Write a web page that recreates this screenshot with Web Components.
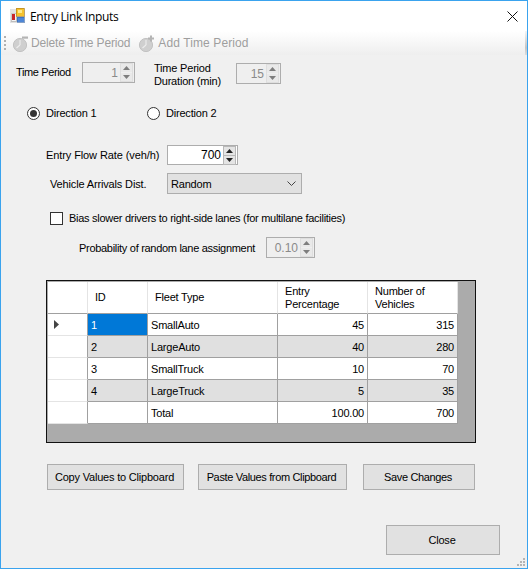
<!DOCTYPE html>
<html>
<head>
<meta charset="utf-8">
<title>Entry Link Inputs</title>
<style>
html, body {
	margin: 0;
	padding: 0;
	background: #f0f0f0;
}
body {
	font: 11px "Liberation Sans", Arial, sans-serif;
	letter-spacing: -0.2px;
	white-space: nowrap;
	color: #000;
}
</style>
</head>
<body>
<entry-link-inputs></entry-link-inputs>
<script>
const arrowUp = '<svg width="7" height="4" viewBox="0 0 7 4"><path d="M3.5 0 7 4H0Z" fill="currentColor"/></svg>';
const arrowDown = '<svg width="7" height="4" viewBox="0 0 7 4"><path d="M0 0H7L3.5 4Z" fill="currentColor"/></svg>';

class WinDialog extends HTMLElement {
	constructor() {
		super();
		this.attachShadow({ mode: 'open' });
		this.shadowRoot.innerHTML = `
<style>
:host {
	display: flex;
	flex-direction: column;
	box-sizing: border-box;
	position: relative;
	width: 528px;
	height: 569px;
	border: 1px solid #3aa3ee;
	background: #f0f0f0;
	overflow: hidden;
}
.title {
	display: flex;
	align-items: center;
	flex: none;
	height: 30px;
	background: #fff;
	padding-left: 9px;
}
.title span {
	margin-left: 5px;
	font: 12px "Open Sans", sans-serif;
	letter-spacing: -0.32px;
}
.logo { margin-top: -1px; }
.close {
	margin-left: auto;
	margin-right: 9px;
	display: block;
}
.grip {
	position: absolute;
	right: 2px;
	bottom: 2px;
}
</style>
<div class="title">
	<svg class="logo" width="15" height="15" viewBox="0 0 15 15" shape-rendering="crispEdges">
		<rect x="0" y="1" width="15" height="14" fill="#e2e2e2"/>
		<rect x="1" y="5" width="5" height="8" fill="#f4f4f4" stroke="#9a9a9a" stroke-width="0.5"/>
		<rect x="2" y="6" width="3" height="6" fill="#c8242a"/>
		<rect x="6" y="0" width="8" height="8" fill="#f6c22c" stroke="#a8781c" stroke-width="0.6"/>
		<rect x="8" y="2" width="4" height="3" fill="#fde98a"/>
		<rect x="7" y="9" width="7" height="5" fill="#4e86d6" stroke="#2c5fa8" stroke-width="0.5"/>
	</svg>
	<span><slot name="title"></slot></span>
	<svg class="close" width="11" height="11" viewBox="0 0 11 11"><path d="M.5.5 10.5 10.5M10.5.5.5 10.5" stroke="#111" stroke-width="1" fill="none"/></svg>
</div>
<slot></slot>
<svg class="grip" width="8" height="8" viewBox="0 0 8 8" fill="#b4b4b4" shape-rendering="crispEdges">
	<rect x="6" y="0" width="2" height="2"/>
	<rect x="3" y="3" width="2" height="2"/><rect x="6" y="3" width="2" height="2"/>
	<rect x="0" y="6" width="2" height="2"/><rect x="3" y="6" width="2" height="2"/><rect x="6" y="6" width="2" height="2"/>
</svg>
`;
	}
}
customElements.define('win-dialog', WinDialog);

class ToolBar extends HTMLElement {
	constructor() {
		super();
		this.attachShadow({ mode: 'open' });
		this.shadowRoot.innerHTML = `
<style>
:host {
	display: flex;
	align-items: center;
	flex: none;
	height: 24px;
	box-sizing: border-box;
	padding-left: 3px;
	background: linear-gradient(#fff, #eeeeee);
	position: relative;
	font-size: 12px;
	letter-spacing: -0.15px;
}
.dots {
	width: 2px;
	height: 15px;
	margin-right: 6px;
	background: repeating-linear-gradient(#b0b0b0 0 2px, transparent 2px 4px);
}
.edge {
	position: absolute;
	right: 0;
	top: 0;
	bottom: 0;
	width: 2px;
	background: linear-gradient(#f4f4f4, #c4c4c4 70%, #dcdcdc);
}
</style>
<div class="dots"></div>
<slot></slot>
<div class="edge"></div>
`;
	}
}
customElements.define('tool-bar', ToolBar);

class ToolButton extends HTMLElement {
	constructor() {
		super();
		this.attachShadow({ mode: 'open' });
		const add = this.getAttribute('kind') == 'add';
		this.shadowRoot.innerHTML = `
<style>
:host {
	display: flex;
	align-items: center;
	color: #9e9e9e;
	margin-right: 8px;
}
svg { margin-right: ${add ? 3 : 2}px; }
</style>
<svg width="17" height="17" viewBox="0 0 17 17">
	<circle cx="8" cy="10" r="6.6" fill="#cfcfcf" stroke="#c2c2c2"/>
	<path d="M8 10 4.5 13M8 10V5" stroke="#ececec" stroke-width="1.2" fill="none"/>
	${add
		? '<path d="M12 0.5h2v2h2v2h-2v2h-2v-2h-2v-2h2z" fill="#b4b4b4"/>'
		: '<rect x="10" y="1.5" width="6" height="2.2" fill="#b4b4b4"/>'}
</svg>
<slot></slot>
`;
	}
}
customElements.define('tool-button', ToolButton);

class NumSpin extends HTMLElement {
	constructor() {
		super();
		this.attachShadow({ mode: 'open' });
		const off = this.hasAttribute('disabled');
		this.shadowRoot.innerHTML = `
<style>
:host {
	display: flex;
	align-items: center;
	box-sizing: border-box;
	flex: none;
	height: 21px;
	border: 1px solid #adadad;
	background: ${off ? '#efefef' : '#fff'};
	color: ${off ? '#8a8a8a' : '#000'};
	font-size: 12px;
	letter-spacing: 0;
}
.val {
	flex: 1;
	text-align: right;
	padding-right: 2px;
}
.btns {
	display: flex;
	flex-direction: column;
	gap: 1px;
	width: 13px;
	margin-right: 1px;
	background: ${off ? '#efefef' : '#b8b8b8'};
	border: 1px solid ${off ? '#dedede' : '#b8b8b8'};
	box-sizing: border-box;
}
.btns div {
	display: flex;
	align-items: center;
	justify-content: center;
	height: 8px;
	background: ${off ? '#e9e9e9' : '#e4e4e4'};
	color: ${off ? '#7e7e7e' : '#222'};
}
svg { display: block; }
</style>
<div class="val"><slot></slot></div>
<div class="btns"><div>${arrowUp}</div><div>${arrowDown}</div></div>
`;
	}
}
customElements.define('num-spin', NumSpin);

class RadioOption extends HTMLElement {
	constructor() {
		super();
		this.attachShadow({ mode: 'open' });
		const dot = this.hasAttribute('checked') ? '<circle cx="6.5" cy="6.5" r="3.5" fill="#333"/>' : '';
		this.shadowRoot.innerHTML = `
<style>
:host {
	display: flex;
	align-items: center;
	gap: 6px;
}
svg { display: block; }
</style>
<svg width="13" height="13" viewBox="0 0 13 13"><circle cx="6.5" cy="6.5" r="6" fill="#fff" stroke="#333"/>${dot}</svg>
<slot></slot>
`;
	}
}
customElements.define('radio-option', RadioOption);

class CheckOption extends HTMLElement {
	constructor() {
		super();
		this.attachShadow({ mode: 'open' });
		this.shadowRoot.innerHTML = `
<style>
:host {
	display: flex;
	align-items: center;
	gap: 6px;
}
.box {
	box-sizing: border-box;
	width: 13px;
	height: 13px;
	border: 1px solid #333;
	background: #fff;
}
</style>
<div class="box"></div>
<slot></slot>
`;
	}
}
customElements.define('check-option', CheckOption);

class DropSelect extends HTMLElement {
	constructor() {
		super();
		this.attachShadow({ mode: 'open' });
		this.shadowRoot.innerHTML = `
<style>
:host {
	display: flex;
	align-items: center;
	justify-content: space-between;
	box-sizing: border-box;
	height: 21px;
	border: 1px solid #adadad;
	background: #e1e1e1;
	padding: 0 5px 0 3px;
}
svg { display: block; }
</style>
<slot></slot>
<svg width="9" height="5" viewBox="0 0 9 5"><path d="M.5.5 4.5 4.5 8.5.5" fill="none" stroke="#444"/></svg>
`;
	}
}
customElements.define('drop-select', DropSelect);

class WinButton extends HTMLElement {
	constructor() {
		super();
		this.attachShadow({ mode: 'open' });
		this.shadowRoot.innerHTML = `
<style>
:host {
	display: flex;
	align-items: center;
	justify-content: center;
	box-sizing: border-box;
	flex: none;
	height: 26px;
	padding-right: 2px;
	border: 1px solid #adadad;
	background: #e1e1e1;
}
</style>
<slot></slot>
`;
	}
}
customElements.define('win-button', WinButton);

const gridRows = [
	['1', 'SmallAuto', '45', '315'],
	['2', 'LargeAuto', '40', '280'],
	['3', 'SmallTruck', '10', '70'],
	['4', 'LargeTruck', '5', '35'],
	['', 'Total', '100.00', '700'],
];

class DataGrid extends HTMLElement {
	constructor() {
		super();
		this.attachShadow({ mode: 'open' });
		const head = ['', 'ID', 'Fleet Type', 'Entry<br>Percentage', 'Number of<br>Vehicles']
			.map(t => `<div class="hd">${t}</div>`).join('');
		const body = gridRows.map((row, i) => {
			const alt = i % 2 == 1 && i < 4 ? ' alt' : '';
			const mark = i == 0 ? '<svg width="5" height="9" viewBox="0 0 5 9"><path d="M0 0 5 4.5 0 9Z" fill="#444"/></svg>' : '';
			return `<div class="rh">${mark}</div>`
				+ `<div class="c${alt}${i == 0 ? ' sel' : ''}">${row[0]}</div>`
				+ `<div class="c${alt}">${row[1]}</div>`
				+ `<div class="c n${alt}">${row[2]}</div>`
				+ `<div class="c n${alt}">${row[3]}</div>`;
		}).join('');
		this.shadowRoot.innerHTML = `
<style>
:host {
	display: block;
	box-sizing: border-box;
	width: 430px;
	height: 163px;
	border: 1px solid #111;
	background: #ababab;
	padding: 1px 0 0 1px;
}
.grid {
	display: grid;
	grid-template-columns: 40px 60px 130px 90px 90px;
	grid-template-rows: 32px repeat(5, 22px);
	width: max-content;
}
.grid > div {
	box-sizing: border-box;
	background: #fff;
}
.hd {
	display: flex;
	align-items: center;
	padding-left: 7px;
	border-right: 1px solid #e4e4e4;
	border-bottom: 1px solid #a0a0a0;
	line-height: 13px;
}
.rh {
	display: flex;
	align-items: center;
	padding-left: 6px;
	border-right: 1px solid #a0a0a0;
	border-bottom: 1px solid #e4e4e4;
}
.c {
	display: flex;
	align-items: center;
	padding-left: 3px;
	border-right: 1px solid #a0a0a0;
	border-bottom: 1px solid #a0a0a0;
}
.grid > .alt { background: #e0e0e0; }
.grid > .sel { background: #0078d7; color: #fff; }
.n {
	justify-content: flex-end;
	padding-right: 3px;
}
</style>
<div class="grid">${head}${body}</div>
`;
	}
}
customElements.define('data-grid', DataGrid);

const appTemplate = document.createElement('template');
appTemplate.innerHTML = `
<style>
:host { display: block; }
.row {
	display: flex;
	align-items: center;
}
.form { display: flex; flex-direction: column; }
.time { align-items: flex-start; margin-top: 7px; padding-left: 15px; height: 26px; }
.time .lbl1 { width: 66px; margin-top: 4px; letter-spacing: -0.38px; }
.time .lbl2 { margin-left: 19px; width: 82px; line-height: 13px; }
.dirs { margin-top: 17px; padding-left: 26px; height: 16px; }
.dirs radio-option { width: 120px; }
.flow { margin-top: 24px; padding-left: 45px; }
.flow span { width: 121px; letter-spacing: -0.1px; }
.dist { margin-top: 8px; padding-left: 49px; }
.dist span { width: 117px; letter-spacing: -0.15px; }
.bias { margin-top: 16px; padding-left: 49px; height: 16px; letter-spacing: -0.28px; }
.prob { margin-top: 11px; padding-left: 78px; }
.prob span { width: 187px; letter-spacing: -0.3px; }
.grid-wrap { margin-top: 22px; padding-left: 45px; }
.btns { margin-top: 21px; padding-left: 46px; }
.close { margin-top: 35px; padding-left: 385px; }
</style>
<win-dialog>
	<span slot="title">Entry Link Inputs</span>
	<tool-bar>
		<tool-button kind="delete">Delete Time Period</tool-button>
		<tool-button kind="add" style="letter-spacing:0.1px">Add Time Period</tool-button>
	</tool-bar>
	<div class="form">
		<div class="row time">
			<span class="lbl1">Time Period</span>
			<num-spin disabled style="width:53px">1</num-spin>
			<span class="lbl2">Time Period<br>Duration (min)</span>
			<num-spin disabled style="width:45px;margin-top:1px">15</num-spin>
		</div>
		<div class="row dirs">
			<radio-option checked>Direction 1</radio-option>
			<radio-option>Direction 2</radio-option>
		</div>
		<div class="row flow">
			<span>Entry Flow Rate (veh/h)</span>
			<num-spin style="width:71px;height:20px">700</num-spin>
		</div>
		<div class="row dist">
			<span>Vehicle Arrivals Dist.</span>
			<drop-select style="width:135px">Random</drop-select>
		</div>
		<div class="row bias">
			<check-option>Bias slower drivers to right-side lanes (for multilane facilities)</check-option>
		</div>
		<div class="row prob">
			<span>Probability of random lane assignment</span>
			<num-spin disabled style="width:49px">0.10</num-spin>
		</div>
		<div class="grid-wrap"><data-grid></data-grid></div>
		<div class="row btns">
			<win-button style="width:137px">Copy Values to Clipboard</win-button>
			<win-button style="width:149px;margin-left:14px;letter-spacing:-0.35px">Paste Values from Clipboard</win-button>
			<win-button style="width:112px;margin-left:16px;letter-spacing:-0.35px">Save Changes</win-button>
		</div>
		<div class="row close">
			<win-button style="width:114px;height:30px">Close</win-button>
		</div>
	</div>
</win-dialog>
`;

class EntryLinkInputs extends HTMLElement {
	constructor() {
		super();
		this.attachShadow({ mode: 'open' });
		this.shadowRoot.appendChild(appTemplate.content.cloneNode(true));
	}
}
customElements.define('entry-link-inputs', EntryLinkInputs);
</script>
</body>
</html>
